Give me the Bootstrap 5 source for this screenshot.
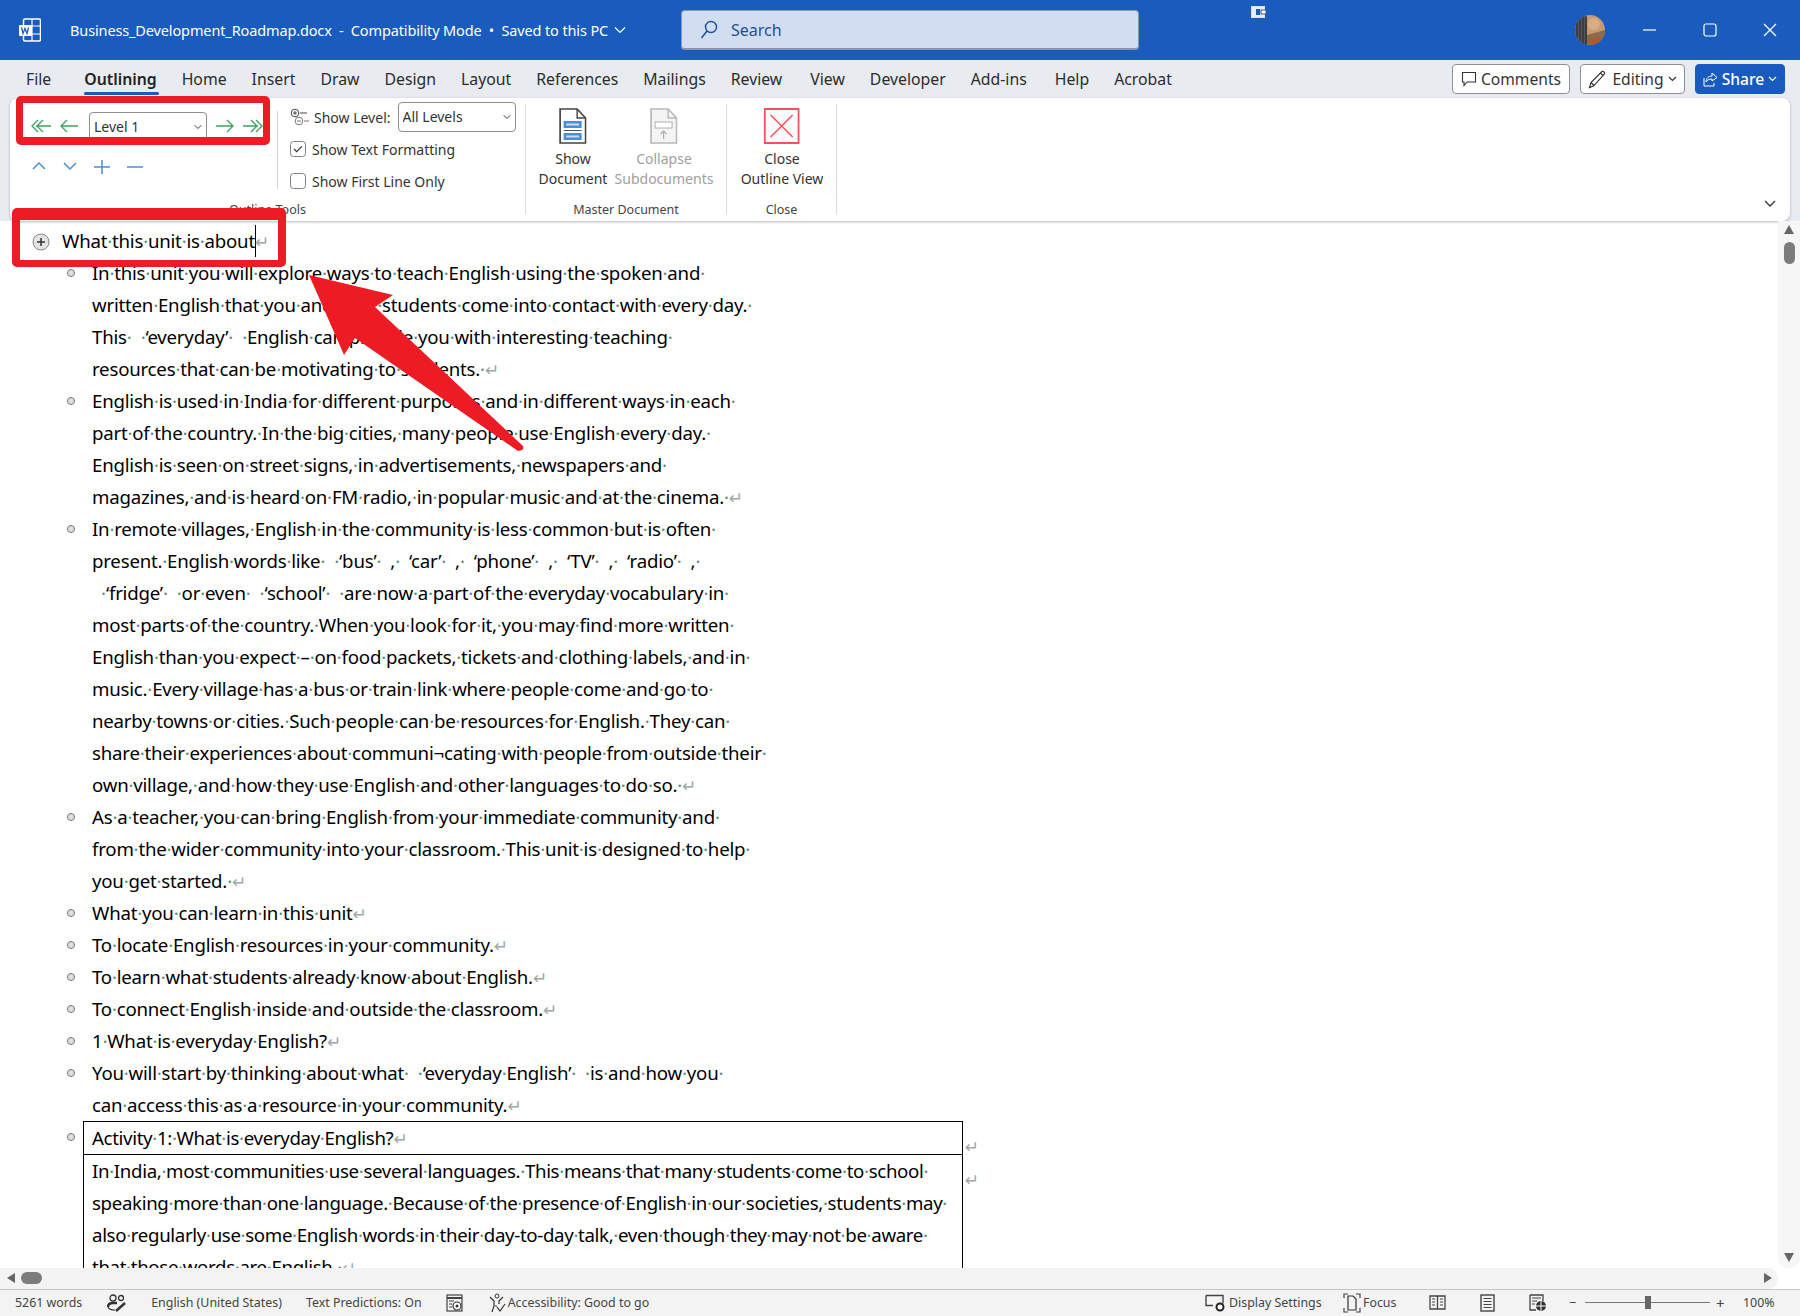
<!DOCTYPE html>
<html lang="en"><head><meta charset="utf-8"><title>Business_Development_Roadmap.docx</title>
<link href="https://cdn.jsdelivr.net/npm/bootstrap@5.3.0/dist/css/bootstrap.min.css" rel="stylesheet">
<style>
html,body{height:100%;margin:0}
body{font-family:"Noto Sans","Open Sans",sans-serif;background:#fff;color:#222;position:relative;overflow:hidden;height:1316px}
.tbar{height:60px;background:#1a5bbe;color:#fff;flex:none}
.wicon{margin-left:18px;width:23px;height:24px}
.dtitle{margin-left:29px;font-size:14.5px;letter-spacing:-.13px;white-space:pre;position:relative;top:1px}
.tchev{margin-left:6px}
.sbox{position:absolute;left:681px;top:10px;width:458px;height:40px;background:#d1ddf0;border:1px solid #8d97a6;border-bottom-width:2px;border-radius:4px;color:#1e4f9b;font-size:16px;padding-left:18px;gap:13px}
.syncic{position:absolute;left:1251px;top:6px}
.avat{position:absolute;left:1575px;top:15px;width:30px;height:30px}
.wctl{position:absolute;top:23px}
.tabrow{height:38px;background:#e8ecf1;flex:none;padding-left:26px;position:relative}
.tabitem{font-size:15.8px;color:#2b2b2b;margin-right:25px;line-height:38px;position:relative}
.tabitem.first{margin-right:33px}
.tabitem.gx{margin-right:28px}
.tabitem.act{font-weight:600;color:#222}
.tabitem.act::after{content:"";position:absolute;left:0;right:-2px;bottom:3px;height:3px;background:#185abd;border-radius:2px}
.rtools{position:absolute;left:1452px;top:4px;gap:10px}
.cmd{height:30px;padding:0;font-size:15.6px;line-height:28px;background:#fff;border:1px solid #8f8f8f;border-radius:4px;color:#333;display:flex;align-items:center;justify-content:center;gap:4px}
.cmd.c1{width:118px}.cmd.c2{width:105px}
.cmd.c3{width:90px;background:#185abd;border-color:#185abd;color:#fff;font-weight:500}
.ribwrap{background:#e8ecf1;padding:0 10px;flex:none;height:123px}
.ribbon{background:#fff;height:123px;border-radius:8px;box-shadow:0 1px 3px rgba(0,0,0,.28);position:relative;padding-top:6px;font-size:14px;color:#333}
.grp{height:110px;border-right:1px solid #dcdcdc;position:relative;flex:none}
.grp-a{width:516px}.grp-b{width:201px}.grp-c{width:110px}
.glabel{position:absolute;left:0;right:0;bottom:-5px;text-align:center;font-size:12.5px;color:#444;line-height:18px}
.sub1{width:268px;height:78px;margin-top:7px;border-right:1px solid #d4d4d4;position:relative;flex:none}
.sub2{padding-left:12px;margin-top:-2px}
.rowa{position:absolute;left:20px;top:0;height:30px;display:flex;align-items:center}
.rowb{position:absolute;left:22px;top:49px;display:flex;gap:13px}
.lvlsel,.allsel{font-size:14px;padding:0 16px 0 4px;border:1px solid #8f8f8f;border-radius:4px;color:#333;background-size:10px 8px;background-position:right 3px center;box-shadow:none;font-family:inherit}
.lvlsel{width:118px;height:30px;margin-left:10px;margin-right:8px;line-height:28px;margin-top:2px}
.allsel{width:118px;height:30px;margin-left:7px;line-height:28px}
.slvl{height:30px;font-size:14px}
.chk{height:32px;font-size:14px}
.chk.c-a{margin-top:1px}
.chk input{width:16px;height:16px;margin:0 6px 0 0;border:1px solid #808080;border-radius:3px;background-color:#fff;box-shadow:none;flex:none}
.chk input:checked{background-color:#fff;border-color:#808080;background-image:url("data:image/svg+xml,%3csvg xmlns='http://www.w3.org/2000/svg' viewBox='0 0 16 16'%3e%3cpath fill='none' stroke='%23333' stroke-width='1.4' d='M3.5 8l3 3 6-6'/%3e%3c/svg%3e")}
.bigs{position:absolute;top:4px;display:flex;flex-direction:column;align-items:center;line-height:20px;font-size:14px;transform:translateX(-50%);white-space:nowrap}
.bigs svg{margin-bottom:5px}
.bigs.off{color:#a0a0a0}
.ribchev{position:absolute;right:14px;bottom:13px}
.docwrap{flex:none;height:1047px;position:relative;overflow:hidden}
.page{font-family:"Noto Sans",sans-serif;font-size:18.67px;line-height:32px;color:#000;letter-spacing:-.22px;white-space:nowrap}
.pm{color:#5f8a80}
.ret{font-style:normal;color:#a0a8a4;font-size:17px;line-height:0;font-family:"DejaVu Sans",sans-serif;letter-spacing:0}
.hd1{padding:4px 0 0 62px;height:36px;position:relative;display:flex;align-items:flex-start}
.hdplus{position:absolute;left:32px;top:12px}
.cursorbar{display:inline-block;width:1px;height:32px;background:#000;vertical-align:top;margin-right:-1px}
.oitem{padding-left:92px;position:relative}
.oitem::before{content:"";position:absolute;left:67px;top:12px;width:8px;height:8px;border-radius:50%;background:#e0e0e0;border:1px solid #777}
.oitem span.ol{display:block}
.oitem.acth{padding-left:0}
.acttbl{position:relative;margin-left:83px;width:880px;border-collapse:collapse;table-layout:fixed;letter-spacing:-.34px}
.acttbl td{border:1px solid #000;padding:0 0 0 8px;position:relative}
.acttbl tr.r1 td{height:33px;padding-top:0}
.acttbl tr.r2 td{padding-top:0}
.acttbl span.ol{display:block}
.tret{position:absolute;right:-17px;top:15px;line-height:1.2}
.vbar{position:absolute;right:0;top:0;bottom:0;width:22px;background:#f6f6f6;border-radius:0 0 10px 10px}
.vthumb{position:absolute;left:6px;top:21px;width:11px;height:22px;background:#7c7c7c;border-radius:6px}
.varr{position:absolute;left:6px;width:0;height:0;border-left:5.5px solid transparent;border-right:5.5px solid transparent}
.varr.u{top:4px;border-bottom:9px solid #666}
.varr.d{bottom:6px;border-top:9px solid #666}
.hbar{height:21px;flex:none;margin-right:22px;background:#f3f3f3;border-radius:0 10px 10px 0;position:relative}
.harr{position:absolute;top:5px;width:0;height:0;border-top:5.5px solid transparent;border-bottom:5.5px solid transparent}
.harr.l{left:7px;border-right:8px solid #666}
.harr.r{right:6px;border-left:8px solid #666}
.hthumb{position:absolute;left:21px;top:4px;width:21px;height:12px;background:#7c7c7c;border-radius:6px}
.sbar{height:27px;flex:none;background:#f3f3f3;border-top:1px solid #c6c6c6;font-size:12.4px;color:#444;position:relative;padding-left:15px;white-space:nowrap}
.sbar .si{margin-right:24px}
.sbar .si.w1{margin-right:25px}
.sbar .ri{position:absolute;top:0;height:26px;display:flex;align-items:center;gap:2px}
.zline{position:absolute;left:1585px;top:12px;width:125px;height:1px;background:#777}
.zthumb{position:absolute;left:1645px;top:6px;width:6px;height:13px;background:#666}
.redbox{position:absolute;border:solid #ed1c24;border-radius:5px;z-index:20;pointer-events:none}
.rb1{left:16px;top:96px;width:254px;height:49px;border-width:7px 7px 8px 7px}
.rb2{left:12px;top:208px;width:274px;height:59px;border-width:12px 8px 7px 8px}
.redarrow{position:absolute;left:0;top:0;z-index:19;pointer-events:none}
</style></head>
<body class="d-flex flex-column">
<header class="tbar d-flex align-items-center position-relative">
<svg class="wicon" viewBox="0 0 23 24"><path d="M7 1h14a1.500 1.500 0 0 1 1.500 1.500v19A1.500 1.500 0 0 1 21 23H7a1.500 1.500 0 0 1-1.500-1.500V2.500A1.500 1.500 0 0 1 7 1z" fill="none" stroke="#fff" stroke-width="1.500"/><path d="M14 1v22M14 8h8M14 16h8" stroke="#fff" stroke-width="1.200"/><rect x="1" y="7" width="13" height="11" rx="1" fill="#fff"/><path d="M3.500 9.500l1.500 6 2-5 2 5 1.500-6" fill="none" stroke="#1a5bbe" stroke-width="1.300"/></svg>
<span class="dtitle">Business_Development_Roadmap.docx  -  Compatibility Mode  •  Saved to this PC</span>
<svg class="tchev" width="12" height="8" viewBox="0 0 12 8"><path d="M1 1.500l5 5 5-5" fill="none" stroke="#fff" stroke-width="1.200"/></svg>
<div class="sbox d-flex align-items-center"><svg width="18" height="20" viewBox="0 0 18 20"><circle cx="11" cy="7" r="5.500" fill="none" stroke="#1e4f9b" stroke-width="1.400"/><path d="M7 11l-5.500 7" stroke="#1e4f9b" stroke-width="1.500"/></svg><span>Search</span></div>
<svg class="syncic" width="16" height="12" viewBox="0 0 16 12"><rect x=".5" y=".5" width="13" height="11" fill="#e8eef8" stroke="#dde" /><rect x="5" y="3" width="4" height="6" fill="#1a5bbe"/><rect x="10" y="4" width="5" height="4" fill="#fff" stroke="#456"/></svg>
<svg class="avat" viewBox="0 0 30 30"><defs><clipPath id="av"><circle cx="15" cy="15" r="15"/></clipPath></defs><g clip-path="url(#av)"><rect width="30" height="30" fill="#c79a72"/><rect width="12" height="30" fill="#55575a"/><path d="M2 0v30M5 0v30M8 0v30M11 2v28" stroke="#2d2c2c" stroke-width="1.200"/><path d="M12 20l18-5v15H12z" fill="#8b6a4c"/><circle cx="19" cy="9" r="6" fill="#d8ad86"/><path d="M15 25l10-3 2 6-11 2z" fill="#b3562a"/><path d="M24 2l6 0v4z" fill="#eee"/></g></svg>
<svg class="wctl" style="left:1643px" width="14" height="14" viewBox="0 0 14 14"><path d="M0 7h13" stroke="#fff" stroke-width="1.200"/></svg>
<svg class="wctl" style="left:1703px" width="14" height="14" viewBox="0 0 14 14"><rect x="1" y="1" width="12" height="12" rx="2" fill="none" stroke="#fff" stroke-width="1.200"/></svg>
<svg class="wctl" style="left:1763px" width="14" height="14" viewBox="0 0 14 14"><path d="M1 1l12 12M13 1L1 13" stroke="#fff" stroke-width="1.200"/></svg>
</header>
<nav class="tabrow d-flex">
<span class="tabitem first">File</span><span class="tabitem act">Outlining</span><span class="tabitem">Home</span><span class="tabitem">Insert</span><span class="tabitem">Draw</span><span class="tabitem">Design</span><span class="tabitem">Layout</span><span class="tabitem">References</span><span class="tabitem">Mailings</span><span class="tabitem gx">Review</span><span class="tabitem">View</span><span class="tabitem">Developer</span><span class="tabitem gx">Add-ins</span><span class="tabitem">Help</span><span class="tabitem">Acrobat</span>
<div class="rtools d-flex">
<button class="btn cmd c1"><svg width="16" height="16" viewBox="0 0 16 16"><path d="M1.500 1.500h13v9.500H6l-3 3.500V11H1.500z" fill="none" stroke="#333" stroke-width="1.100"/></svg>Comments</button>
<button class="btn cmd c2"><svg width="20" height="20" viewBox="0 0 20 20"><path d="M1.500 18.500l1.500-5L14 2.500c1-1 3.500 1.500 2.500 2.500L5.500 17zM3 13.500l3 3M12.500 4l3 3" fill="none" stroke="#333" stroke-width="1.100"/></svg>Editing<svg width="9" height="6" viewBox="0 0 9 6"><path d="M1 1l3.500 3.500L8 1" fill="none" stroke="#333" stroke-width="1.200"/></svg></button>
<button class="btn cmd c3"><svg width="15" height="16" viewBox="0 0 15 16"><path d="M1 7v8h10v-3M3 11c0-4 3-6 6-6V2l5 4.500L9 10V8c-3 0-5 1-6 3z" fill="none" stroke="#fff" stroke-width="1"/></svg>Share<svg width="9" height="6" viewBox="0 0 9 6"><path d="M1 1l3.500 3.500L8 1" fill="none" stroke="#fff" stroke-width="1.200"/></svg></button>
</div>
</nav>
<div class="ribwrap"><div class="ribbon d-flex">
<section class="grp grp-a d-flex">
<div class="sub1">
<div class="rowa">
<svg width="21" height="14" viewBox="0 0 21 14"><path d="M8 1L2 7l6 6M13 1L7 7l6 6M6 7h15" fill="none" stroke="#3da35d" stroke-width="1.300"/></svg>
<svg class="ms-2" width="20" height="14" viewBox="0 0 20 14"><path d="M8 1L2 7l6 6M2 7h17" fill="none" stroke="#3da35d" stroke-width="1.300"/></svg>
<select class="form-select lvlsel"><option>Level 1</option></select>
<svg width="20" height="14" viewBox="0 0 20 14"><path d="M12 1l6 6-6 6M18 7H1" fill="none" stroke="#3da35d" stroke-width="1.300"/></svg>
<svg class="ms-2" width="20" height="14" viewBox="0 0 20 14"><path d="M13 1l6 6-6 6M8 1l6 6-6 6M0 7h15" fill="none" stroke="#3da35d" stroke-width="1.300"/></svg>
</div>
<div class="rowb">
<svg width="14" height="12" viewBox="0 0 14 12"><path d="M1 9l6-6 6 6" fill="none" stroke="#4a8fd6" stroke-width="1.500"/></svg>
<svg class="ms-1" width="14" height="12" viewBox="0 0 14 12"><path d="M1 3l6 6 6-6" fill="none" stroke="#4a8fd6" stroke-width="1.500"/></svg>
<svg class="ms-1" width="16" height="14" viewBox="0 0 16 14"><path d="M0 7h16M8 0v14" stroke="#4a8fd6" stroke-width="1.500"/></svg>
<svg class="ms-1" width="16" height="14" viewBox="0 0 16 14"><path d="M0 7h16" stroke="#4a8fd6" stroke-width="1.500"/></svg>
</div>
</div>
<div class="sub2">
<div class="slvl d-flex align-items-center"><svg class="me-1" width="20" height="18" viewBox="0 0 20 18"><circle cx="5" cy="5" r="3.800" fill="none" stroke="#444"/><path d="M3 5h4M5 3v4M10 5h7" stroke="#444"/><circle cx="9" cy="13" r="3.800" fill="none" stroke="#777"/><path d="M7 13h4M14 13h5" stroke="#777"/></svg><span>Show Level:</span><select class="form-select allsel"><option>All Levels</option></select></div>
<label class="chk c-a d-flex align-items-center"><input class="form-check-input" type="checkbox" checked>Show Text Formatting</label>
<label class="chk d-flex align-items-center"><input class="form-check-input" type="checkbox">Show First Line Only</label>
</div>
<div class="glabel">Outline Tools</div>
</section>
<section class="grp grp-b">
<div class="bigs" style="left:47px"><svg width="28" height="36" viewBox="0 0 28 36"><path d="M1.500 1h17L27 10v25H1.500z" fill="#fff" stroke="#444" stroke-width="1.700"/><path d="M18.500 1v9H27" fill="none" stroke="#444" stroke-width="1.400"/><rect x="5" y="13" width="18" height="7" fill="#4a8fd6"/><rect x="7.500" y="15.500" width="13" height="2" fill="#c9dcf0"/><path d="M5 22.500h18" stroke="#555"/><rect x="5" y="25" width="18" height="7" fill="#4a8fd6"/><rect x="7.500" y="27.500" width="13" height="2" fill="#c9dcf0"/></svg><span>Show</span><span>Document</span></div>
<div class="bigs off" style="left:138px"><svg width="28" height="36" viewBox="0 0 28 36"><path d="M1.500 1h17L27 10v25H1.500z" fill="#f4f4f4" stroke="#b8b8b8" stroke-width="1.700"/><path d="M18.500 1v9H27" fill="none" stroke="#b8b8b8" stroke-width="1.400"/><rect x="5.500" y="14" width="17" height="6" fill="#fff" stroke="#b0b0b0"/><path d="M14 31v-8M11 26l3-3 3 3" fill="none" stroke="#b0b0b0" stroke-width="1.200"/></svg><span>Collapse</span><span>Subdocuments</span></div>
<div class="glabel">Master Document</div>
</section>
<section class="grp grp-c">
<div class="bigs" style="left:55px"><svg width="36" height="36" viewBox="0 0 36 36"><rect x="1" y="1" width="34" height="34" fill="#fafafa" stroke="#f0535e" stroke-width="2"/><path d="M7 7l22 22M29 7L7 29" stroke="#f0535e" stroke-width="1.500"/></svg><span>Close</span><span>Outline View</span></div>
<div class="glabel">Close</div>
</section>
<svg class="ribchev" width="12" height="8" viewBox="0 0 12 8"><path d="M1 1l5 5 5-5" fill="none" stroke="#333" stroke-width="1.300"/></svg>
</div></div>
<main class="docwrap">
<div class="page">
<div class="hd1"><svg class="hdplus" width="18" height="18" viewBox="0 0 18 18"><circle cx="9" cy="9" r="8" fill="#e4e4e4" stroke="#888"/><path d="M5 9h8M9 5v8" stroke="#333" stroke-width="1.500"/></svg><span class="dt">What this unit is about<b class="cursorbar"></b><i class="ret">↵</i></span></div>
<div class="oitem dt"><span class="ol">In this unit you will explore ways to teach English using the spoken and </span><span class="ol">written English that you and your students come into contact with every day. </span><span class="ol">This &ensp; ‘everyday’ &ensp; English can provide you with interesting teaching </span><span class="ol">resources that can be motivating to students. <i class="ret">↵</i></span></div>
<div class="oitem dt"><span class="ol">English is used in India for different purposes and in different ways in each </span><span class="ol">part of the country. In the big cities, many people use English every day. </span><span class="ol">English is seen on street signs, in advertisements, newspapers and </span><span class="ol">magazines, and is heard on FM radio, in popular music and at the cinema. <i class="ret">↵</i></span></div>
<div class="oitem dt"><span class="ol">In remote villages, English in the community is less common but is often </span><span class="ol">present. English words like &ensp; ‘bus’ &ensp;, &ensp;‘car’ &ensp;, &ensp;‘phone’ &ensp;, &ensp;‘TV’ &ensp;, &ensp;‘radio’ &ensp;, </span><span class="ol">&ensp; ‘fridge’ &ensp; or even &ensp; ‘school’ &ensp; are now a part of the everyday vocabulary in </span><span class="ol">most parts of the country. When you look for it, you may find more written </span><span class="ol">English than you expect – on food packets, tickets and clothing labels, and in </span><span class="ol">music. Every village has a bus or train link where people come and go to </span><span class="ol">nearby towns or cities. Such people can be resources for English. They can </span><span class="ol">share their experiences about communi¬cating with people from outside their </span><span class="ol">own village, and how they use English and other languages to do so. <i class="ret">↵</i></span></div>
<div class="oitem dt"><span class="ol">As a teacher, you can bring English from your immediate community and </span><span class="ol">from the wider community into your classroom. This unit is designed to help </span><span class="ol">you get started. <i class="ret">↵</i></span></div>
<div class="oitem dt">What you can learn in this unit<i class="ret">↵</i></div>
<div class="oitem dt">To locate English resources in your community.<i class="ret">↵</i></div>
<div class="oitem dt">To learn what students already know about English.<i class="ret">↵</i></div>
<div class="oitem dt">To connect English inside and outside the classroom.<i class="ret">↵</i></div>
<div class="oitem dt">1 What is everyday English?<i class="ret">↵</i></div>
<div class="oitem dt"><span class="ol">You will start by thinking about what &ensp; ‘everyday English’ &ensp; is and how you </span><span class="ol">can access this as a resource in your community.<i class="ret">↵</i></span></div>
<div class="oitem acth">
<table class="acttbl dt">
<tr class="r1"><td>Activity 1: What is everyday English?<i class="ret">↵</i><i class="ret tret">↵</i></td></tr>
<tr class="r2"><td><span class="ol">In India, most communities use several languages. This means that many students come to school </span><span class="ol">speaking more than one language. Because of the presence of English in our societies, students may </span><span class="ol">also regularly use some English words in their day-to-day talk, even though they may not be aware </span><span class="ol">that those words are English. <i class="ret">↵</i></span><i class="ret tret">↵</i></td></tr>
</table>
</div>
</div>
<div class="vbar"><span class="varr u"></span><span class="vthumb"></span><span class="varr d"></span></div>
</main>
<div class="hbar"><span class="harr l"></span><span class="hthumb"></span><span class="harr r"></span></div>
<footer class="sbar d-flex align-items-center">
<span class="si w1">5261 words</span>
<svg class="si" width="20" height="20" viewBox="0 0 20 20"><circle cx="6" cy="5" r="3" fill="none" stroke="#333" stroke-width="1.300"/><circle cx="14" cy="5" r="2.500" fill="none" stroke="#333" stroke-width="1.300"/><path d="M1 14c0-3 2-4 5-4h4M9 18l9-8" stroke="#333" stroke-width="2.500" fill="none"/><path d="M1 14c1 3 4 3 7 3" stroke="#333" fill="none" stroke-width="1.200"/></svg>
<span class="si">English (United States)</span>
<span class="si">Text Predictions: On</span>
<svg width="18" height="20" viewBox="0 0 18 20"><rect x="1" y="2" width="15" height="16" fill="none" stroke="#444" stroke-width="1.200"/><path d="M1 5h15" stroke="#444" stroke-width="2"/><path d="M3 8h5M3 11h3M3 14h3" stroke="#444"/><circle cx="11" cy="13" r="4" fill="#fff" stroke="#333" stroke-width="1.200"/><circle cx="11" cy="13" r="1.500" fill="#333"/></svg>
<svg class="ms-4" width="20" height="20" viewBox="0 0 20 20"><circle cx="9" cy="3" r="2" fill="none" stroke="#333"/><path d="M2 4l4 4v5l-2 6M15 4l-4 4v3M7 13h2" fill="none" stroke="#333" stroke-width="1.200"/><path d="M9 14l3 4 5-7" fill="none" stroke="#333" stroke-width="1.200"/></svg>
<span>Accessibility: Good to go</span>
<span class="ri" style="left:1205px"><svg width="22" height="20" viewBox="0 0 22 20"><path d="M1 2.500h17v8M1 2.500v10h7" fill="none" stroke="#444" stroke-width="1.400"/><circle cx="15" cy="14" r="3.500" fill="#fff" stroke="#222" stroke-width="2"/></svg>Display Settings</span>
<span class="ri" style="left:1343px"><svg width="18" height="20" viewBox="0 0 18 20"><path d="M1 5V1h4M13 1h4v4M1 15v4h4M13 19h4v-4" fill="none" stroke="#444" stroke-width="1.200"/><path d="M5 3h5l3 3v11H5z" fill="none" stroke="#333" stroke-width="1.200"/></svg>Focus</span>
<span class="ri" style="left:1429px"><svg width="17" height="18" viewBox="0 0 17 18"><path d="M1 2h15v13H1zM8.500 2v13" fill="none" stroke="#444" stroke-width="1.300"/><path d="M3 5h3M3 8h3M3 11h3M11 5h3M11 8h3M11 11h3" stroke="#444"/></svg></span>
<span class="ri" style="left:1480px"><svg width="15" height="18" viewBox="0 0 15 18"><rect x="1" y="1" width="13" height="16" fill="none" stroke="#444" stroke-width="1.400"/><path d="M3.500 4.500h8M3.500 7.500h8M3.500 10.500h8M3.500 13.500h8" stroke="#444"/></svg></span>
<span class="ri" style="left:1529px"><svg width="18" height="18" viewBox="0 0 18 18"><path d="M1 1h13v6M1 1v15h6" fill="none" stroke="#444" stroke-width="1.300"/><path d="M3 4h9M3 7h5M3 10h3" stroke="#444"/><circle cx="12" cy="12" r="5" fill="#333"/><path d="M7 12h10M12 7v10" stroke="#fff"/></svg></span>
<span class="ri" style="left:1569px">−</span>
<span class="zline"></span><span class="zthumb"></span>
<span class="ri" style="left:1716px;font-size:15px">+</span>
<span class="ri" style="left:1743px">100%</span>
</footer>
<div class="redbox rb1"></div>
<div class="redbox rb2"></div>
<svg class="redarrow" width="600" height="500" viewBox="0 0 600 500"><path d="M309 275L393 295L375 307L523 446Q525 450 518 451L355 338L344 355Z" fill="#ed1c24"/></svg>
<script>
document.querySelectorAll('.dt').forEach(function(el){
 var w=document.createTreeWalker(el,NodeFilter.SHOW_TEXT),n,a=[];
 while(n=w.nextNode())a.push(n);
 a.forEach(function(t){
  if(t.nodeValue.indexOf(' ')<0||!t.nodeValue.trim())return;
  var f=document.createDocumentFragment();
  t.nodeValue.split(' ').forEach(function(p,i){
   if(i){var s=document.createElement('span');s.className='pm';s.textContent='·';f.appendChild(s);}
   if(p)f.appendChild(document.createTextNode(p));
  });
  t.parentNode.replaceChild(f,t);
 });
});
</script>
<script src="https://cdn.jsdelivr.net/npm/bootstrap@5.3.0/dist/js/bootstrap.bundle.min.js"></script>
</body></html>
